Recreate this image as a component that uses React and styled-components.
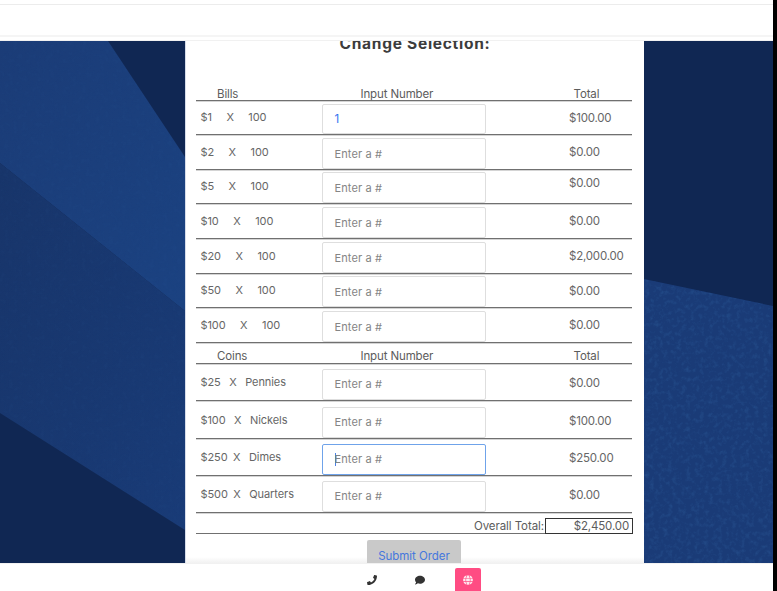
import React from "react";
import styled, { createGlobalStyle } from "styled-components";
import { FaPhone, FaComment, FaGlobe } from "react-icons/fa";

const GlobalStyle = createGlobalStyle`
  * { box-sizing: border-box; }
  body { margin: 0; overflow: hidden; background: #fff; }
`;

const Page = styled.div`
  width: 777px;
  height: 591px;
  display: flex;
  flex-direction: column;
  background: #fff;
  border-right: 4px solid #000;
  overflow: hidden;
  font-family: Inter, "Liberation Sans", sans-serif;
  font-size: 11px;
  color: #666;
`;

const TopBar = styled.header`
  flex: 0 0 41px;
  display: flex;
  flex-direction: column;
  justify-content: space-between;
  padding-top: 4px;
`;

const Rule = styled.div`
  height: ${(p) => p.$size}px;
  background: ${(p) => p.$color};
`;

const TopRules = styled.div`
  display: flex;
  flex-direction: column;
  gap: 3px;
`;

const Stage = styled.main`
  position: relative;
  flex: 0 0 522px;
  overflow: hidden;
  display: flex;
  padding-left: 185px;
  background: #102753;
`;

const Backdrop = styled.svg`
  position: absolute;
  inset: 0;
`;

const Card = styled.section`
  position: relative;
  width: 459px;
  height: 522px;
  overflow: hidden;
  padding: 0 10px;
  background: linear-gradient(#fff 516px, #f1f1f1 522px);
  border-left: 1px solid #d6dcea;
`;

const Title = styled.h1`
  margin: -7px 0 0;
  height: 54px;
  font-size: 15.5px;
  line-height: 19px;
  font-weight: 700;
  letter-spacing: 0.72px;
  text-align: center;
  color: #3c3c3c;
`;

const Row = styled.div`
  display: grid;
  grid-template-columns: 125px 164.5px 83.5px 63px;
  align-items: center;
  width: 436px;
  height: ${(p) => p.$height}px;
  border-bottom: 1px solid #707070;
  box-shadow: 0 1px 0 #d4d4d4;
`;

const HeadRow = styled(Row)`
  align-items: end;
  line-height: 13px;
  font-size: 11.5px;
  letter-spacing: -0.13px;
  color: #5c5c5c;
`;

const HeadCell = styled.span`
  grid-column: ${(p) => p.$col};
  padding-left: ${(p) => p.$indent}px;
  white-space: nowrap;
`;

const Label = styled.span`
  display: flex;
  gap: ${(p) => p.$gap}px;
  padding-left: 4.5px;
  padding-bottom: ${(p) => p.$lift}px;
  white-space: nowrap;
  letter-spacing: -0.08px;
`;

const Factor = styled.span`
  margin-right: ${(p) => p.$extra}px;
`;

const Field = styled.div`
  align-self: end;
  display: flex;
  align-items: center;
  height: ${(p) => p.$height}px;
  margin-left: 1px;
  padding-left: 11.5px;
  padding-bottom: ${(p) => p.$lift}px;
  border: 1px solid ${(p) => (p.$focused ? "#6fa3ea" : "#dedede")};
  border-radius: 2px;
  background: #fff;
  letter-spacing: 0.13px;
  font-size: ${(p) => (p.$filled ? 11.5 : 11)}px;
  color: ${(p) => (p.$filled ? "#3272f0" : "#858585")};
`;

const Caret = styled.span`
  width: 1px;
  height: 13px;
  margin-right: -1px;
  background: #4c80e6;
`;

const Amount = styled.span`
  grid-column: 4;
  font-size: 11.5px;
  letter-spacing: -0.2px;
  padding-top: ${(p) => p.$drop}px;
  padding-bottom: ${(p) => (p.$raised ? 7 : 0)}px;
`;

const OverallRow = styled.div`
  display: flex;
  justify-content: flex-end;
  align-items: flex-end;
  width: 437px;
  height: 21px;
  border-bottom: 1px solid #707070;
  color: #5c5c5c;
  font-size: 11.5px;
`;

const OverallLabel = styled.span`
  line-height: 14px;
  margin-right: 1px;
  letter-spacing: -0.08px;
`;

const OverallBox = styled.span`
  width: 88px;
  height: 16px;
  margin-bottom: -1px;
  padding-right: 3px;
  border: 1px solid #333;
  line-height: 14px;
  text-align: right;
  letter-spacing: -0.15px;
`;

const Submit = styled.button`
  display: block;
  margin: 6px 0 0 171px;
  padding: 0;
  width: 94px;
  height: 33px;
  border: 0;
  border-radius: 2px;
  background: #c9c9c9;
  color: #4577dd;
  font: 11.5px/33px Inter, "Liberation Sans", sans-serif;
  letter-spacing: -0.05px;
`;

const BottomBar = styled.nav`
  flex: 1;
  display: flex;
  justify-content: center;
  padding: 4px 0 0 67px;
  gap: 22px;
  border-top: 1px solid #f1f1f1;
`;

const NavItem = styled.a`
  width: 26px;
  height: 26px;
  display: flex;
  align-items: center;
  justify-content: center;
  padding-bottom: 2px;
  border-radius: 2px 2px 0 0;
  background: ${(p) => (p.$active ? "#ff4c83" : "transparent")};
  color: ${(p) => (p.$active ? "#ffe9f0" : "#333")};
`;

const bills = [
  { value: "$1", total: "$100.00", height: 34, entered: "1" },
  { value: "$2", total: "$0.00", height: 35 },
  { value: "$5", total: "$0.00", height: 34, raised: true },
  { value: "$10", total: "$0.00", height: 35 },
  { value: "$20", total: "$2,000.00", height: 35 },
  { value: "$50", total: "$0.00", height: 34 },
  { value: "$100", total: "$0.00", height: 35 },
];

const coins = [
  { value: "$25", unit: "Pennies", total: "$0.00", height: 37 },
  { value: "$100", unit: "Nickels", total: "$100.00", height: 38 },
  { value: "$250", unit: "Dimes", total: "$250.00", height: 37, focused: true, extra: -3 },
  { value: "$500", unit: "Quarters", total: "$0.00", height: 37, extra: -3 },
];

function HeaderLine({ name, height }) {
  return (
    <HeadRow $height={height}>
      <HeadCell $col={1} $indent={21}>{name}</HeadCell>
      <HeadCell $col={2} $indent={39.5}>Input Number</HeadCell>
      <HeadCell $col={4} $indent={4.5}>Total</HeadCell>
    </HeadRow>
  );
}

function OrderLine({ item, gap, unit, coin }) {
  return (
    <Row $height={item.height}>
      <Label $gap={gap} $lift={coin ? 0 : 1}>
        <Factor $extra={item.extra || 0}>{item.value}</Factor>
        <span>X</span>
        <span>{unit}</span>
      </Label>
      <Field
        $height={item.entered ? 30 : 31}
        $lift={coin ? 1 : 0}
        $focused={item.focused}
        $filled={item.entered}
      >
        {item.focused && <Caret />}
        {item.entered || "Enter a #"}
      </Field>
      <Amount $raised={item.raised} $drop={coin ? 2 : 0}>{item.total}</Amount>
    </Row>
  );
}

function PaperBackdrop() {
  return (
    <Backdrop width="773" height="522" viewBox="0 0 773 522">
      <defs>
        <linearGradient id="upper" x1="0" y1="0" x2="1" y2="1">
          <stop offset="0" stopColor="#1b3c77" />
          <stop offset="1" stopColor="#1b4281" />
        </linearGradient>
        <linearGradient id="middle" x1="0" y1="0" x2="1" y2="1">
          <stop offset="0" stopColor="#18356a" />
          <stop offset="1" stopColor="#193b77" />
        </linearGradient>
        <filter id="grain" x="0" y="0" width="100%" height="100%">
          <feTurbulence type="fractalNoise" baseFrequency="0.22" numOctaves="3" seed="4" />
          <feColorMatrix values="0 0 0 0 0.05  0 0 0 0 0.2  0 0 0 0 0.5  2 0 0 0 -0.9" />
        </filter>
        <clipPath id="leftClip"><path d="M0 0H108L185 116V489L0 372Z" /></clipPath>
        <clipPath id="rightClip"><path d="M644 238L773 265V522H644Z" /></clipPath>
      </defs>
      <rect width="773" height="522" fill="#102753" />
      <path d="M0 0H108L185 116V270L0 122Z" fill="url(#upper)" />
      <path d="M0 122L185 270V489L0 372Z" fill="url(#middle)" />
      <path d="M644 238L773 265V522H644Z" fill="#1a3b77" />
      <g clipPath="url(#leftClip)">
        <rect width="185" height="489" filter="url(#grain)" opacity="0.06" />
      </g>
      <g clipPath="url(#rightClip)">
        <rect x="644" y="238" width="129" height="284" filter="url(#grain)" opacity="0.25" />
      </g>
    </Backdrop>
  );
}

export default function App() {
  return (
    <Page>
      <GlobalStyle />
      <TopBar>
        <Rule $size={1} $color="#ececec" />
        <TopRules>
          <Rule $size={2} $color="#f5f5f5" />
          <Rule $size={1} $color="#f1f1f1" />
        </TopRules>
      </TopBar>
      <Stage>
        <PaperBackdrop />
        <Card>
          <Title>Change Selection:</Title>
          <HeaderLine name="Bills" height={13} />
          {bills.map((b) => (
            <OrderLine key={b.value} item={b} gap={14.5} unit="100" />
          ))}
          <HeaderLine name="Coins" height={21} />
          {coins.map((c) => (
            <OrderLine key={c.value} item={c} gap={8.5} unit={c.unit} coin />
          ))}
          <OverallRow>
            <OverallLabel>Overall Total:</OverallLabel>
            <OverallBox>$2,450.00</OverallBox>
          </OverallRow>
          <Submit>Submit Order</Submit>
        </Card>
      </Stage>
      <BottomBar>
        <NavItem><FaPhone size={10} /></NavItem>
        <NavItem><FaComment size={10} /></NavItem>
        <NavItem $active><FaGlobe size={10} /></NavItem>
      </BottomBar>
    </Page>
  );
}
